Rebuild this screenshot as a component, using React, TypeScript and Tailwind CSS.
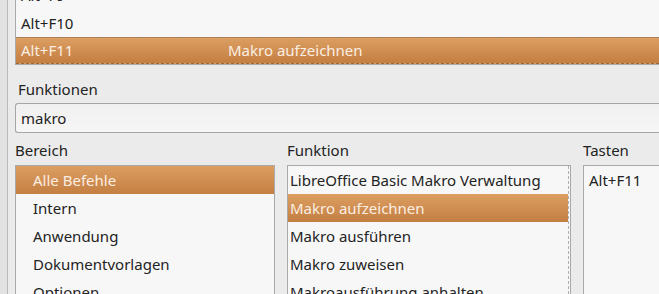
import React from "react";

const sel = "bg-gradient-to-b from-[#dc9e62] to-[#c47f42] text-[#fbeee2]";

export default function App() {
  return (
    <div
      className="w-[659px] h-[294px] overflow-hidden flex bg-[#ebebeb] text-[15px] text-[#232323]"
      style={{ fontFamily: '"Noto Sans", "Open Sans", sans-serif' }}
    >
      <div className="w-[8px] shrink-0 bg-[#e2e2e2] border-r border-[#b9b9b9]" />
      <div className="flex-1 min-w-0 pl-[7px] flex flex-col">
        {/* top list */}
        <div className="mt-[-20px] shrink-0 bg-[#f7f7f7] border border-r-0 border-[#a9a9a9] flex flex-col">
          <div className="h-[28px] flex items-center pl-[5px]">Alt+F9</div>
          <div className="h-[28px] flex items-center pl-[5px]">Alt+F10</div>
          <div className={`h-[27px] flex items-center pl-[5px] border-t border-[#a08060] border-b border-dashed border-b-[#9a6a3e] ${sel}`}>
            <span className="w-[207px]">Alt+F11</span>
            <span>Makro aufzeichnen</span>
          </div>
        </div>
        <div className="mt-[14px] h-[20px] leading-[20px] pl-[3px]">Funktionen</div>
        <div className="mt-[4px] h-[30px] shrink-0 flex items-center pl-[5px] border border-r-0 border-[#a6a6a6] rounded-l-[3px] bg-gradient-to-b from-[#f0f0f0] to-[#f6f6f6]">
          makro
        </div>
        <div className="mt-[7px] flex gap-[12px]">
          <div className="w-[260px] shrink-0 flex flex-col">
            <div className="h-[20px] leading-[20px]">Bereich</div>
            <div className="mt-[5px] h-[200px] bg-[#f7f7f7] border border-[#a9a9a9] flex flex-col">
              <div className={`h-[28px] shrink-0 flex items-center pl-[17px] ${sel}`}>Alle Befehle</div>
              <div className="h-[28px] shrink-0 flex items-center pl-[17px]">Intern</div>
              <div className="h-[28px] shrink-0 flex items-center pl-[17px]">Anwendung</div>
              <div className="h-[28px] shrink-0 flex items-center pl-[17px]">Dokumentvorlagen</div>
              <div className="h-[28px] shrink-0 flex items-center pl-[17px]">Optionen</div>
            </div>
          </div>
          <div className="w-[284px] shrink-0 flex flex-col">
            <div className="h-[20px] leading-[20px]">Funktion</div>
            <div className="mt-[5px] h-[200px] bg-[#f7f7f7] border border-[#a9a9a9] flex">
              <div className="flex-1 flex flex-col border-r border-dashed border-[#b0b0b0]">
                <div className="h-[28px] shrink-0 flex items-center pl-[2px]">LibreOffice Basic Makro Verwaltung</div>
                <div className={`h-[28px] shrink-0 flex items-center pl-[2px] ${sel}`}>Makro aufzeichnen</div>
                <div className="h-[28px] shrink-0 flex items-center pl-[2px]">Makro ausführen</div>
                <div className="h-[28px] shrink-0 flex items-center pl-[2px]">Makro zuweisen</div>
                <div className="h-[28px] shrink-0 flex items-center pl-[2px]">Makroausführung anhalten</div>
              </div>
              <div className="w-[1px]" />
            </div>
          </div>
          <div className="flex-1 min-w-0 flex flex-col">
            <div className="h-[20px] leading-[20px]">Tasten</div>
            <div className="mt-[5px] h-[200px] bg-[#f7f7f7] border border-r-0 border-[#a9a9a9] flex flex-col">
              <div className="h-[28px] shrink-0 flex items-center pl-[5px]">Alt+F11</div>
            </div>
          </div>
        </div>
      </div>
    </div>
  );
}
